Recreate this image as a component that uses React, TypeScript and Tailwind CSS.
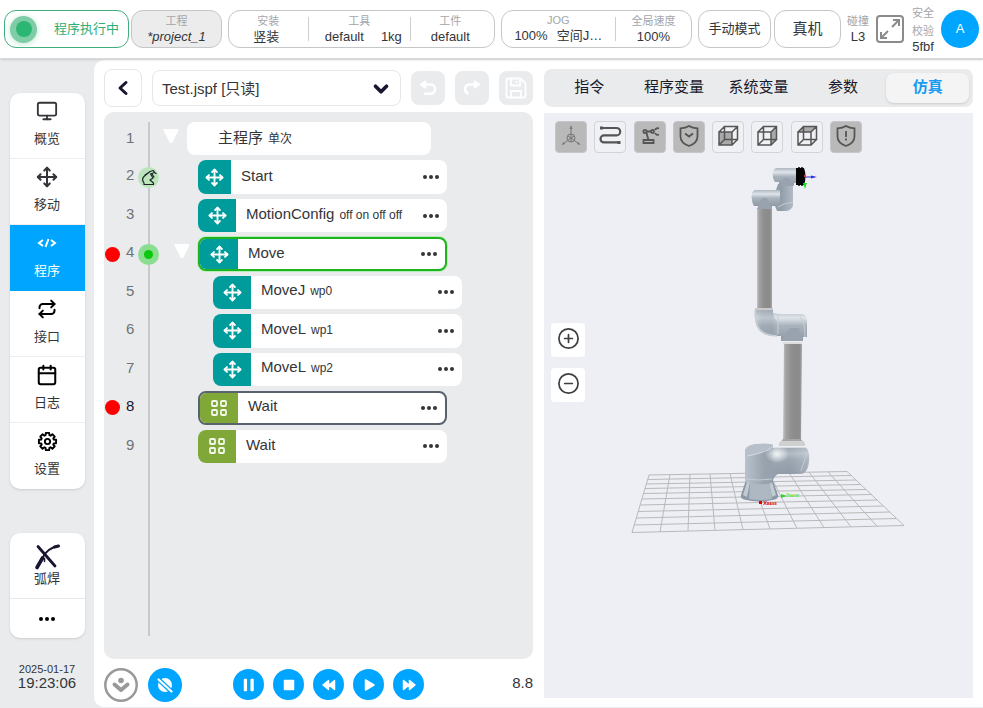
import { useState } from "react";
import type { ReactNode } from "react";
import { Calendar, ChevronDown, CircleMinus, CirclePlus, Monitor, Move, Repeat } from "lucide-react";

type Command = {
  line: number;
  level: 0 | 1 | 2;
  label: string;
  detail?: string;
  kind: "root" | "start" | "motion" | "wait";
  state?: "running" | "selected";
  breakpoint?: boolean;
  expandable?: boolean;
  marker?: "robot" | "active";
};

const commands: Command[] = [
  { line: 1, level: 0, label: "主程序", detail: "单次", kind: "root", expandable: true },
  { line: 2, level: 1, label: "Start", kind: "start", marker: "robot" },
  { line: 3, level: 1, label: "MotionConfig", detail: "off on off off", kind: "motion" },
  { line: 4, level: 1, label: "Move", kind: "motion", state: "running", breakpoint: true, expandable: true, marker: "active" },
  { line: 5, level: 2, label: "MoveJ", detail: "wp0", kind: "motion" },
  { line: 6, level: 2, label: "MoveL", detail: "wp1", kind: "motion" },
  { line: 7, level: 2, label: "MoveL", detail: "wp2", kind: "motion" },
  { line: 8, level: 1, label: "Wait", kind: "wait", state: "selected", breakpoint: true },
  { line: 9, level: 1, label: "Wait", kind: "wait" },
];

const indents = ["w-[4px]", "w-[15px]", "w-[30px]"];

function Dots({ className = "" }: { className?: string }) {
  return (
    <svg viewBox="0 0 16 4" className={"h-1 w-4 " + className} fill="currentColor" aria-hidden="true">
      <circle cx="2" cy="2" r="2" />
      <circle cx="8" cy="2" r="2" />
      <circle cx="14" cy="2" r="2" />
    </svg>
  );
}

function Field({ label, children, className = "" }: { label: string; children: ReactNode; className?: string }) {
  return (
    <div className={"flex flex-col items-center justify-center leading-4 " + className}>
      <span className="text-[11px] text-[#a3a6ab]">{label}</span>
      <span className="whitespace-nowrap text-[13px]">{children}</span>
    </div>
  );
}

function Divider() {
  return <span className="my-auto h-6 w-px shrink-0 bg-[#cfcfcf]" />;
}

function Header() {
  const pill = "h-[38px] rounded-xl border border-[#c4c6c8]";
  return (
    <header className="relative z-10 flex h-[59px] shrink-0 items-center border-b border-[#d9dadc] bg-white px-1 shadow-sm">
      <div className="flex h-[38px] w-[125px] shrink-0 items-center justify-between rounded-xl border border-[#3fae7c] pr-[9px] pl-[5px] text-[13px] text-[#2fae76]">
        <span className="flex size-[27px] items-center justify-center rounded-full bg-[#7fcda6] shadow-[0_1px_6px_#bfe6d2]">
          <span className="size-4 rounded-full bg-[#2cb673]" />
        </span>
        程序执行中
      </div>
      <button type="button" className={"ml-0.5 w-[91px] shrink-0 bg-[#ececec] " + pill}>
        <Field label="工程"><i>*project_1</i></Field>
      </button>
      <div className={"ml-1.5 flex flex-[267_1_0%] " + pill}>
        <Field label="安装" className="flex-[80_1_0%]"><span className="pr-1">竖装</span></Field>
        <Divider />
        <Field label="工具" className="flex-[103_1_0%]">
          <span className="flex gap-[17px] pl-2"><span>default</span><span>1kg</span></span>
        </Field>
        <Divider />
        <Field label="工件" className="flex-[80_1_0%] pr-1">default</Field>
      </div>
      <div className={"ml-1.5 flex flex-[191_1_0%] " + pill}>
        <Field label="JOG" className="flex-[113_1_0%] pb-0.5">
          <span className="flex gap-[9px]"><span>100%</span><span>空间J…</span></span>
        </Field>
        <Divider />
        <Field label="全局速度" className="flex-[75_1_0%]">100%</Field>
      </div>
      <button type="button" className={"ml-1.5 w-[73px] shrink-0 text-[13px] " + pill}>手动模式</button>
      <button type="button" className={"ml-[3px] w-[67px] shrink-0 text-[15px] " + pill}>真机</button>
      <Field label="碰撞" className="ml-[5px] w-6 shrink-0">L3</Field>
      <button type="button" aria-label="全屏" className="ml-1.5 shrink-0 text-[#8b8b8b]">
        <svg viewBox="0 0 28 28" className="size-7" fill="none" stroke="currentColor" strokeWidth="2">
          <rect x="1" y="1" width="26" height="26" rx="3" />
          <path d="M16 12 23 5M17 5h6v6M12 16 5 23M5 17v6h6" />
        </svg>
      </button>
      <div className="ml-[7px] flex w-6 shrink-0 flex-col items-center">
        <span className="text-center text-[11px] leading-[18px] text-[#a3a6ab]">安全<br />校验</span>
        <span className="text-[13px] leading-[14px]">5fbf</span>
      </div>
      <button type="button" className="ml-1.5 size-[38px] shrink-0 rounded-full bg-[#00a5ff] text-[13px] text-white">A</button>
    </header>
  );
}

function CodeIcon() {
  return (
    <svg viewBox="0 0 22 22" className="size-[22px]" fill="none" stroke="currentColor" strokeWidth="2" aria-hidden="true">
      <path d="M7 8 3 11l4 3M15 8l4 3-4 3M12.500 7 9.500 15" />
    </svg>
  );
}

const gearPath =
  "M" +
  Array.from({ length: 8 }, (_, tooth) =>
    [
      [-11, 10],
      [11, 10],
      [17, 7.5],
      [28, 7.5],
    ]
      .map(([offset, radius]) => {
        const angle = ((tooth * 45 + offset - 90) * Math.PI) / 180;
        return (12 + radius * Math.cos(angle)).toFixed(2) + " " + (12 + radius * Math.sin(angle)).toFixed(2);
      })
      .join("L"),
  ).join("L") +
  "Z";

function GearIcon() {
  return (
    <svg viewBox="0 0 24 24" className="size-[21px]" fill="none" stroke="#000" strokeWidth="2.200" strokeLinejoin="round" aria-hidden="true">
      <path d={gearPath} />
      <circle cx="12" cy="12" r="3" />
    </svg>
  );
}

function TorchIcon() {
  return (
    <svg viewBox="0 0 26 26" className="size-[26px]" fill="none" stroke="#181530" strokeLinecap="round" aria-hidden="true">
      <path d="M4 2.500 21 22" strokeWidth="2.800" />
      <path d="M3 23.500 8.500 14" strokeWidth="3.600" />
      <path d="M8.500 14C11 8 15 4 24 2" strokeWidth="1.800" />
      <path d="M20.500 3 24.500 2" strokeWidth="3" />
      <path d="M10.500 14.500v3" strokeWidth="1.500" />
    </svg>
  );
}

function Sidebar() {
  const items: { label: string; icon: ReactNode; active?: boolean }[] = [
    { label: "概览", icon: <Monitor size={22} strokeWidth={2} /> },
    { label: "移动", icon: <Move size={22} strokeWidth={2.2} /> },
    { label: "程序", icon: <CodeIcon />, active: true },
    { label: "接口", icon: <Repeat size={20} color="#000" strokeWidth={2.4} /> },
    { label: "日志", icon: <Calendar size={22} color="#000" strokeWidth={2.2} /> },
    { label: "设置", icon: <GearIcon /> },
  ];
  return (
    <aside className="flex w-[94px] shrink-0 flex-col items-center pt-[34px] pb-4">
      <nav className="w-[75px] overflow-hidden rounded-[10px] bg-white text-[13px] shadow">
        {items.map((item) => (
          <button
            key={item.label}
            type="button"
            className={
              "flex h-[66px] w-full flex-col items-center gap-[7px] border-b pt-1.5 last:border-b-0 " +
              (item.active ? "border-[#00a5ff] bg-[#00a5ff] text-white" : "border-[#eeeeee]")
            }
          >
            <span className="flex h-6 items-center">{item.icon}</span>
            <span className="leading-[18px]">{item.label}</span>
          </button>
        ))}
      </nav>
      <div className="mt-11 w-[75px] overflow-hidden rounded-[10px] bg-white text-[13px] shadow">
        <button type="button" className="flex h-[66px] w-full flex-col items-center border-b border-[#e8e8e8] pt-[11px]">
          <TorchIcon />
          <span className="leading-[18px]">弧焊</span>
        </button>
        <button type="button" aria-label="更多" className="flex h-[39px] w-full items-center justify-center text-black">
          <Dots />
        </button>
      </div>
      <time className="mt-auto flex flex-col items-center pb-px text-[15px] leading-4">
        <span className="text-[11px] leading-3">2025-01-17</span>
        <span>19:23:06</span>
      </time>
    </aside>
  );
}

function FileBar() {
  const tool = "flex size-[34px] shrink-0 items-center justify-center rounded-lg bg-[#eaebed] text-white";
  return (
    <div className="flex h-[38px] items-center gap-2.5">
      <button type="button" aria-label="返回" className="flex size-[38px] shrink-0 items-center justify-center rounded-lg border border-[#e6e6e8] text-[#181530]">
        <svg viewBox="0 0 12 16" className="h-4 w-3" fill="none" stroke="currentColor" strokeWidth="3" strokeLinecap="round" strokeLinejoin="round">
          <path d="M9 2.500 3 8l6 5.500" />
        </svg>
      </button>
      <div className="relative min-w-0 flex-1">
        <select aria-label="程序文件" className="h-9 w-full appearance-none rounded-lg border border-[#e6e6e8] bg-white pt-0.5 pl-[9px] text-[15px]">
          <option>Test.jspf [只读]</option>
        </select>
        <ChevronDown size={22} strokeWidth={4} color="#181530" className="pointer-events-none absolute top-2 right-[9px]" />
      </div>
      <button type="button" aria-label="撤销" className={tool}>
        <svg viewBox="0 0 20 20" className="size-5" fill="none" stroke="currentColor" strokeWidth="2.500" strokeLinecap="round">
          <path d="M4 6.500h8.500a4.600 4.600 0 0 1 0 9.200H7" />
          <path d="M7.500 3v7L2.500 6.500z" fill="currentColor" strokeWidth="1.500" strokeLinejoin="round" />
        </svg>
      </button>
      <button type="button" aria-label="重做" className={tool}>
        <svg viewBox="0 0 20 20" className="size-5" fill="none" stroke="currentColor" strokeWidth="2.500" strokeLinecap="round">
          <path d="M16 6.500H7.500a4.600 4.600 0 0 0-2 8.700" />
          <path d="M12.500 3v7l5-3.500z" fill="currentColor" strokeWidth="1.500" strokeLinejoin="round" />
        </svg>
      </button>
      <button type="button" aria-label="保存" className={tool}>
        <svg viewBox="0 0 22 22" className="size-[22px]" fill="none" stroke="currentColor" strokeWidth="1.800" strokeLinejoin="round">
          <path d="M3 1.500h12.500l5 5V19a1.500 1.500 0 0 1-1.500 1.500H3A1.500 1.500 0 0 1 1.500 19V3A1.500 1.500 0 0 1 3 1.500z" />
          <path d="M6 2v6.500h9V2M6 20v-6h10v6M11.500 4v2" />
        </svg>
      </button>
    </div>
  );
}

function CommandIcon({ kind }: { kind: Command["kind"] }) {
  if (kind === "wait") {
    return (
      <span className="flex w-[38px] shrink-0 items-center justify-center bg-[#7fa839] text-[#f3f7ea]">
        <svg viewBox="0 0 16 16" className="size-4" fill="none" stroke="currentColor" strokeWidth="1.800">
          <rect x="1" y="1" width="5" height="5" rx="1" />
          <rect x="10" y="1" width="5" height="5" rx="1" />
          <rect x="1" y="10" width="5" height="5" rx="1" />
          <rect x="10" y="10" width="5" height="5" rx="1" />
        </svg>
      </span>
    );
  }
  return (
    <span className={"flex shrink-0 items-center justify-center bg-[#009b9b] text-white " + (kind === "start" ? "w-[33px]" : "w-[38px]")}>
      <Move size={19} strokeWidth={2.4} />
    </span>
  );
}

function Marker({ type }: { type?: Command["marker"] }) {
  if (type === "active") {
    return (
      <span className="flex size-[21px] items-center justify-center rounded-full bg-[#8bdd8f]">
        <span className="size-[9px] rounded-full bg-[#0cc80c]" />
      </span>
    );
  }
  if (type === "robot") {
    return (
      <span className="flex size-[21px] items-center justify-center rounded-full bg-[#bce5be]">
        <svg viewBox="0 0 16 16" className="size-4" fill="none" stroke="#20242a" strokeWidth="1.200" strokeLinejoin="round" strokeLinecap="round">
          <path d="M3 15.500V14c-1.500-2-2-5 .5-7L9 2.500l3.500-1 1 2 1.500 1M4 6l3-2M9.500 5l4-1.500M9.500 5 12 9M11 5l2 3M12 9l-3 2 3.500 3v1.500H3" />
        </svg>
      </span>
    );
  }
  return <span className="size-[21px]" />;
}

function CommandRow({ command }: { command: Command }) {
  const root = command.kind === "root";
  const frame =
    command.state === "running"
      ? "border-2 border-[#1fb41f] shadow-[0_0_0_1px_#b5f0b5]"
      : command.state === "selected"
        ? "border-2 border-[#59636f]"
        : "";
  return (
    <li className="flex items-center">
      <span className={"ml-px size-[15px] shrink-0 rounded-full " + (command.breakpoint ? "bg-[#ff0000]" : "")} />
      <span className={"w-[18px] pl-1.5 " + (root ? "" : "pb-[3px] ") + (command.line === 8 ? "text-[#181530]" : "text-[#6f7378]")}>
        {command.line}
      </span>
      <Marker type={command.marker} />
      <span className={indents[command.level]} />
      <span className="flex w-6 items-center pb-1.5">
        {command.expandable && (
          <button type="button" aria-label="折叠" className="text-white">
            <svg viewBox="0 0 16 14" className="h-3.5 w-4" fill="currentColor" stroke="currentColor" strokeWidth="2" strokeLinejoin="round">
              <path d="M1.500 1h13L8.500 13h-1z" />
            </svg>
          </button>
        )}
      </span>
      <div className={"flex h-full items-stretch overflow-hidden rounded-lg bg-white " + (root ? "w-[244px] pl-[21px] " : "w-[249px] ") + frame}>
        {!root && <CommandIcon kind={command.kind} />}
        <span className={"flex flex-1 items-baseline gap-[5px] self-center pl-2.5 leading-5 " + (root ? "" : "pb-[3px]")}>
          <span>{command.label}</span>
          {command.detail && <span className="text-[12px]">{command.detail}</span>}
        </span>
        {!root && (
          <button type="button" aria-label={command.label + " 菜单"} className="pr-2">
            <Dots />
          </button>
        )}
      </div>
    </li>
  );
}

function PlayerBar() {
  const round = "flex size-[31px] items-center justify-center rounded-full bg-[#00a5ff] text-white";
  const shapes = [
    { label: "暂停", path: "M3.500 2.500h1.800v11H3.500zM10.200 2.500H12v11h-1.800z" },
    { label: "停止", path: "M3.500 3.500h9v9h-9z" },
    { label: "后退", path: "M7.500 3.500v9L2 8zM13.500 3.500v9L8 8z" },
    { label: "播放", path: "M4.500 3v10l8.500-5z" },
    { label: "前进", path: "M2.500 3.500v9L8 8zM8.500 3.500v9L14 8z" },
  ];
  return (
    <div className="flex h-12 shrink-0 items-center pt-[3px]">
      <button type="button" aria-label="定位" className="text-[#999999]">
        <svg viewBox="0 0 34 34" className="size-[34px]" fill="none" stroke="currentColor">
          <circle cx="17" cy="17" r="15.700" strokeWidth="2.500" />
          <circle cx="17" cy="12.500" r="2.800" fill="currentColor" stroke="none" />
          <path d="m10.500 16.500 6.500 5.500 6.500-5.500" strokeWidth="4" strokeLinecap="round" strokeLinejoin="round" />
        </svg>
      </button>
      <button type="button" aria-label="断点" className="ml-2.5 text-white">
        <svg viewBox="0 0 34 34" className="size-[34px]">
          <circle cx="17" cy="17" r="17" fill="#00a5ff" />
          <circle cx="17" cy="17" r="7" fill="currentColor" />
          <path d="m9 10 15.500 14.500" stroke="#00a5ff" strokeWidth="4.500" />
          <path d="m10.500 11.500 13 12" stroke="currentColor" strokeWidth="2.200" strokeLinecap="round" />
        </svg>
      </button>
      <div className="ml-[51px] flex gap-[9px]">
        {shapes.map((shape) => (
          <button key={shape.label} type="button" aria-label={shape.label} className={round}>
            <svg viewBox="0 0 16 16" className="size-4" fill="currentColor" stroke="currentColor" strokeWidth="1.500" strokeLinejoin="round">
              <path d={shape.path} />
            </svg>
          </button>
        ))}
      </div>
      <span className="ml-auto pb-0.5 text-[15px]">8.8</span>
    </div>
  );
}

function Tabs() {
  const tabs = ["指令", "程序变量", "系统变量", "参数", "仿真"];
  const [active, setActive] = useState("仿真");
  return (
    <div role="tablist" className="grid h-[38px] shrink-0 grid-cols-5 rounded-lg bg-[#eaebed] px-[3px] py-1 text-[15px]">
      {tabs.map((tab) => (
        <button
          key={tab}
          type="button"
          role="tab"
          aria-selected={tab === active}
          onClick={() => setActive(tab)}
          className={"mx-px rounded-lg pb-px " + (tab === active ? "bg-[#f4f4f5] font-bold text-[#169bf0] shadow-sm" : "text-[#181a2c]")}
        >
          {tab}
        </button>
      ))}
    </div>
  );
}

const shield = "M16 6c2.500 1.800 5 2.300 8.500 2.300v8.200c0 4-3 7.500-8.500 9.500-5.500-2-8.500-5.500-8.500-9.500V8.300C11 8.300 13.500 7.800 16 6z";

function Cube({ face }: { face: string }) {
  return (
    <g strokeWidth="1.500">
      <path d={face} fill="#a9a9a9" stroke="none" />
      <path d="M7 12h13v13H7zM12.500 6.500h13v13h-13zM7 12l5.500-5.500M20 12l5.500-5.500M20 25l5.500-5.500M7 25l5.500-5.500" />
    </g>
  );
}

const viewTools: { label: string; on: boolean; art: ReactNode }[] = [
  {
    label: "坐标系",
    on: true,
    art: (
      <g stroke="#777" strokeWidth="1">
        <circle cx="16" cy="18" r="4" />
        <path d="M16 7v11L8 24M16 18l8 6M16 18l-3-2M16 18l3-2M16 18v4" />
        <path d="m16 5 1.500 4h-3zM6.500 25l2-3 1.500 2zM25.500 25l-2-3-1.500 2z" fill="#777" stroke="none" />
      </g>
    ),
  },
  {
    label: "轨迹",
    on: false,
    art: (
      <g strokeWidth="2.200">
        <path d="M8 8h14.500a3.700 3.700 0 0 1 0 7.400H10a3.500 3.500 0 0 0 0 7h14" />
        <path d="M6 6.500h3v3H6zM23.500 21h3v3h-3z" fill="currentColor" stroke="none" />
      </g>
    ),
  },
  {
    label: "机器人",
    on: true,
    art: (
      <g strokeWidth="1.800">
        <path d="M9.500 20h10v3h-10zM14.500 20 12.500 13M12.500 11.500h4.500" />
        <circle cx="11" cy="11.500" r="1.600" />
        <circle cx="18.500" cy="11.500" r="1.500" />
        <path d="M25 8.500a3 3 0 0 0-4 1.500M25 14.500a3 3 0 0 1-4-1.500" />
      </g>
    ),
  },
  { label: "安全", on: true, art: <path d={shield + "M12 13.500l4 3 4-3"} strokeWidth="1.800" /> },
  { label: "正视图", on: false, art: <Cube face="M7 12h13v13H7z" /> },
  { label: "侧视图", on: false, art: <Cube face="M20 12l5.500-5.500v13L20 25z" /> },
  { label: "俯视图", on: false, art: <Cube face="M7 12l5.500-5.500h13L20 12z" /> },
  { label: "警告", on: true, art: <path d={shield + "M16 11v6M16 18.500v2"} strokeWidth="1.800" /> },
];

const gridColumns: [number, number][] = [
  [649, 632], [670, 660], [690, 688], [710, 715], [730, 743], [750, 770],
  [769, 797], [789, 824], [809, 851], [828, 877], [847, 904],
];
const gridRows: [number, number][] = [
  [475, 471.5], [479.5, 475.5], [484, 480], [488.5, 484.5], [493.5, 489.5], [499, 494.5],
  [505, 500], [511.5, 506], [518, 512], [525, 518.5], [532.5, 525.5],
];

function RobotScene() {
  const topEdge = (x: number) => 475 - ((x - 649) / 198) * 3.5;
  const bottomEdge = (x: number) => 532.5 - ((x - 632) / 272) * 7;
  const leftEdge = (y: number) => 649 - ((y - 475) / 57.5) * 17;
  const rightEdge = (y: number) => 847 + ((y - 471.5) / 54) * 57;
  return (
    <svg viewBox="544 113 429 585" className="absolute inset-0 size-full" fontFamily="Liberation Sans, sans-serif" role="img" aria-label="机器人仿真">
      <defs>
        <linearGradient id="tube" x1="0" x2="1" y1="0" y2="0">
          <stop offset="0" stopColor="#c4c4c4" />
          <stop offset=".15" stopColor="#a2a2a2" />
          <stop offset=".45" stopColor="#8f8f8f" />
          <stop offset=".85" stopColor="#8a8a8a" />
          <stop offset="1" stopColor="#a5a5a5" />
        </linearGradient>
        <linearGradient id="barrel" x1="0" x2="0" y1="0" y2="1">
          <stop offset="0" stopColor="#aeb7c0" />
          <stop offset=".25" stopColor="#dfe5ea" />
          <stop offset=".5" stopColor="#aab4be" />
          <stop offset="1" stopColor="#8f9aa6" />
        </linearGradient>
        <linearGradient id="body" x1="0" x2="1" y1="0" y2="0">
          <stop offset="0" stopColor="#b9c2cb" />
          <stop offset=".3" stopColor="#98a3af" />
          <stop offset=".7" stopColor="#919ca9" />
          <stop offset="1" stopColor="#b2bbc5" />
        </linearGradient>
        <radialGradient id="shine">
          <stop offset="0" stopColor="#f1f4f6" />
          <stop offset="1" stopColor="#f1f4f6" stopOpacity="0" />
        </radialGradient>
      </defs>

      <g stroke="#b9b9bb" strokeWidth="1">
        {gridColumns.map(([top, bottom]) => (
          <line key={top} x1={top} y1={topEdge(top)} x2={bottom} y2={bottomEdge(bottom)} />
        ))}
        {gridRows.map(([left, right]) => (
          <line key={left} x1={leftEdge(left)} y1={left} x2={rightEdge(right)} y2={right} />
        ))}
      </g>

      <path d="M746 480 741 495q-1 3 3 4.500 16 4 31 0 4-1.500 3-4.500l-6-17z" fill="#8b97a4" />
      <path d="M750 482h19l3 17q-11 2-23 0z" fill="#adb8c3" />
      <path d="m747 482-4 13 4 2 3-15zM772 482l4 13-4 2-3-15z" fill="#c2cad2" />
      <path d="M745 450q1-5 12-6 12-1 16 1v3h33q4 4 3 14-1 10-7 12h-24q-4 2-6 9-13 3-27-1z" fill="url(#body)" />
      <path d="M745 452q1-7 12-8 12-1 16 1-1 5-26 11z" fill="#b7c0ca" />
      <path d="M747 456q22-4 26-10" fill="none" stroke="#d5dce2" strokeWidth="1" />
      <path d="M746 479q12 2 26 0" fill="none" stroke="#c3cbd3" strokeWidth="1" />
      <path d="M774 447h32q3 5 3 13l-3 11q-3 2-10 2h-19q-4 0-5-8z" fill="url(#barrel)" opacity=".4" />
      <ellipse cx="777" cy="454" rx="12" ry="9" fill="url(#shine)" />
      <path d="m808 449-7 22" stroke="#c3cbd3" strokeWidth="1" />
      <path d="M784 343h18l-1 96h-18z" fill="url(#tube)" />
      <path d="M783 439h18l4 4v3h-26v-3z" fill="#d0d0d0" />
      <path d="M783 439h18l1 2h-20z" fill="#a7a7a7" />

      <path d="M755 310h18v3q5 1 9 1h20q5 1 5 7v16h-4v4h-22v-5h-5q-12 0-17-6-5-6-4-20z" fill="url(#barrel)" />
      <path d="M755 310h18q0 8 5 13 2 7-1 13-12-1-17-6-5-6-5-20z" fill="url(#body)" opacity=".45" />
      <path d="M755 310q0 14 5 20 5 5 17 6" fill="none" stroke="#c9d0d7" strokeWidth="1.500" />
      <path d="M790 328h9l4 13h-22z" fill="#98a3af" />
      <path d="M778 314v20M800 317q5 5 5 20" fill="none" stroke="#c6cdd4" strokeWidth="1" />
      <path d="M783 342h19v2h-19z" fill="#dedede" />
      <path d="M757 208h15v100h-15z" fill="url(#tube)" />
      <path d="M755 308h18v2h-18z" fill="#cacaca" />

      <path d="M778 184h15v22q-2 5-8 5h-8l-2-5h-3v3h-14v-3h-4q-3-5-2-12 1-4 4-4h20z" fill="url(#body)" />
      <path d="M756 190h24v12q-1 4-5 4h-21q-3-5-2-12 1-4 4-4z" fill="url(#barrel)" />
      <path d="M762 198h5l5 11h-15z" fill="#98a3af" />
      <path d="M777 168h20v15h-3v2h-15v-3h-4q-3-4-2-10 1-4 4-4z" fill="url(#barrel)" />
      <path d="M784 178h5l5 8h-15z" fill="#98a3af" />
      <path d="M778 207q6-4 15-5" fill="none" stroke="#c3cbd3" strokeWidth="1" />
      <path d="M796 168h8q3 8 0 17h-8z" fill="#050505" />
      <path d="M799 167v19M802 167v19" stroke="#050505" strokeWidth="1.500" />
      <path d="M805 177h8" stroke="#3030dd" strokeWidth="1" />
      <path d="M811 175.500v3l6-1.500z" fill="#3030dd" />
      <path d="M804 176h2" stroke="#e33" strokeWidth="2" />
      <path d="M803 183h4l-2 6z" fill="#20df20" />

      <path d="M759 502.500h3" stroke="#e00000" strokeWidth="3" />
      <text x="763" y="505" fontSize="6" fontWeight="bold" fill="#e00000">X<tspan fontSize="3.500">BASE</tspan></text>
      <path d="m781 494 6 2-6 2z" fill="#20df20" />
      <text x="786" y="497" fontSize="5" fontWeight="bold" fill="#58e83a">Y<tspan fontSize="3.500">BASE</tspan></text>
    </svg>
  );
}

function Simulation() {
  const zoom = "flex size-[34px] items-center justify-center rounded bg-white pb-[3px] text-[#3f3f42]";
  return (
    <div role="tabpanel" className="relative mt-1.5 mb-[9px] flex-1 overflow-hidden bg-[#eeeff4]">
      <RobotScene />
      <div className="relative ml-[11px] mt-2 flex w-[307px] justify-between">
        {viewTools.map((tool) => (
          <button
            key={tool.label}
            type="button"
            aria-label={tool.label}
            aria-pressed={tool.on}
            className={"size-8 rounded border text-[#555] " + (tool.on ? "border-[#c6c6c8] bg-[#b9b9b9]" : "border-[#d2d3d7] bg-[#f0f1f5]")}
          >
            <svg viewBox="1 2 30 30" className="size-full" fill="none" stroke="currentColor">
              {tool.art}
            </svg>
          </button>
        ))}
      </div>
      <div className="absolute top-[210px] left-[7px] flex flex-col gap-[11px]">
        <button type="button" aria-label="放大" className={zoom}><CirclePlus size={23} strokeWidth={1.8} /></button>
        <button type="button" aria-label="缩小" className={zoom}><CircleMinus size={23} strokeWidth={1.8} /></button>
      </div>
    </div>
  );
}

export default function App() {
  return (
    <div className="flex h-screen min-h-[680px] flex-col bg-[#eaebed] font-['Liberation_Sans','Noto_Sans_CJK_SC',sans-serif] text-[#333539]">
      <Header />
      <div className="flex min-h-0 flex-1">
        <Sidebar />
        <main className="mt-px mb-px grid min-w-0 flex-1 grid-cols-2 gap-[11px] rounded-l-[10px] bg-white px-2.5 pt-[9px]">
          <section className="flex min-h-0 flex-col">
            <FileBar />
            <div className="relative mt-[5px] flex-1 rounded-[10px] bg-[#eaebed] pt-2.5 text-[15px]">
              <span className="absolute top-2.5 bottom-[23px] left-11 w-0.5 bg-[#c8c9cb]" />
              <ol className="relative grid h-[341px] auto-rows-fr gap-[5px]">
                {commands.map((command) => (
                  <CommandRow key={command.line} command={command} />
                ))}
              </ol>
            </div>
            <PlayerBar />
          </section>
          <section className="flex min-h-0 flex-col">
            <Tabs />
            <Simulation />
          </section>
        </main>
      </div>
    </div>
  );
}
